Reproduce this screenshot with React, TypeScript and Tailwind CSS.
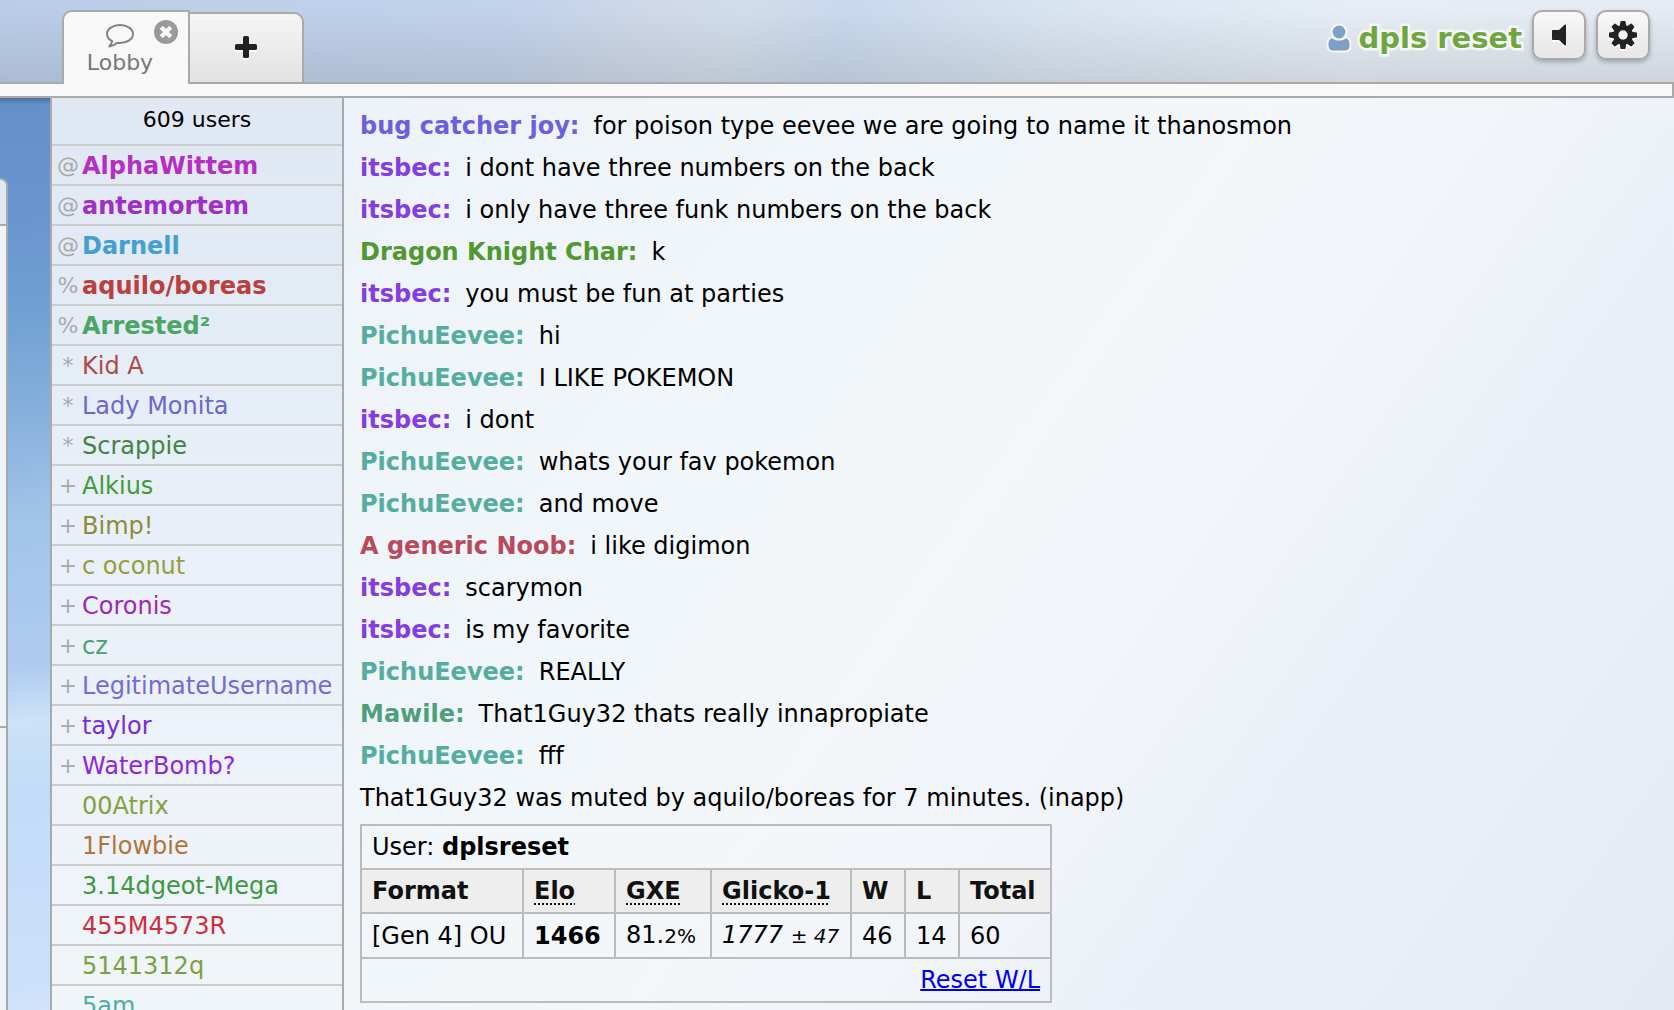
const users: { rank: string; name: string; color: string; staff?: boolean }[] = [
  { rank: "@", name: "AlphaWittem", color: "text-[#b52fc4]", staff: true },
  { rank: "@", name: "antemortem", color: "text-[#a02fc9]", staff: true },
  { rank: "@", name: "Darnell", color: "text-[#459fd0]", staff: true },
  { rank: "%", name: "aquilo/boreas", color: "text-[#bb3f3b]", staff: true },
  { rank: "%", name: "Arrested²", color: "text-[#4ba664]", staff: true },
  { rank: "*", name: "Kid A", color: "text-[#ad4b45]" },
  { rank: "*", name: "Lady Monita", color: "text-[#6c68c8]" },
  { rank: "*", name: "Scrappie", color: "text-[#458244]" },
  { rank: "+", name: "Alkius", color: "text-[#439b37]" },
  { rank: "+", name: "Bimp!", color: "text-[#8c8c3c]" },
  { rank: "+", name: "c oconut", color: "text-[#989d3c]" },
  { rank: "+", name: "Coronis", color: "text-[#9a2bb5]" },
  { rank: "+", name: "cz", color: "text-[#47a36e]" },
  { rank: "+", name: "LegitimateUsername", color: "text-[#736bd6]" },
  { rank: "+", name: "taylor", color: "text-[#7a2bd8]" },
  { rank: "+", name: "WaterBomb?", color: "text-[#8f27d9]" },
  { rank: "", name: "00Atrix", color: "text-[#85a13c]" },
  { rank: "", name: "1Flowbie", color: "text-[#b07639]" },
  { rank: "", name: "3.14dgeot-Mega", color: "text-[#3f9743]" },
  { rank: "", name: "455M4573R", color: "text-[#cc2f3f]" },
  { rank: "", name: "5141312q", color: "text-[#7ba042]" },
  { rank: "", name: "5am", color: "text-[#4faea3]" },
];

const itsbec = "text-[#843ddf]";
const pichu = "text-[#55ada0]";

const messages = [
  { name: "bug catcher joy", color: "text-[#6c5ee0]", text: "for poison type eevee we are going to name it thanosmon" },
  { name: "itsbec", color: itsbec, text: "i dont have three numbers on the back" },
  { name: "itsbec", color: itsbec, text: "i only have three funk numbers on the back" },
  { name: "Dragon Knight Char", color: "text-[#529830]", text: "k" },
  { name: "itsbec", color: itsbec, text: "you must be fun at parties" },
  { name: "PichuEevee", color: pichu, text: "hi" },
  { name: "PichuEevee", color: pichu, text: "I LIKE POKEMON" },
  { name: "itsbec", color: itsbec, text: "i dont" },
  { name: "PichuEevee", color: pichu, text: "whats your fav pokemon" },
  { name: "PichuEevee", color: pichu, text: "and move" },
  { name: "A generic Noob", color: "text-[#b94a5c]", text: "i like digimon" },
  { name: "itsbec", color: itsbec, text: "scarymon" },
  { name: "itsbec", color: itsbec, text: "is my favorite" },
  { name: "PichuEevee", color: pichu, text: "REALLY" },
  { name: "Mawile", color: "text-[#4f9f7c]", text: "That1Guy32 thats really innapropiate" },
  { name: "PichuEevee", color: pichu, text: "fff" },
];

function CommentIcon() {
  return (
    <svg viewBox="0 0 28 24" className="h-6 w-7" fill="none" stroke="#808080" strokeWidth="1.9" strokeLinejoin="round" aria-hidden="true">
      <path d="M14 1C6.800 1 1 5 1 10c0 3 2 5.500 5.200 7.200-.4 2.200-1.500 3.700-2.900 5.300 3-.5 5.800-1.700 8.100-3.700.9.100 1.700.2 2.600.2 7.200 0 13-4 13-9s-5.800-9-13-9z" />
    </svg>
  );
}

function CloseIcon() {
  return (
    <svg viewBox="0 0 24 24" className="size-6" aria-hidden="true">
      <circle cx="12" cy="12" r="12" fill="#999" />
      <path d="M8.800 8.800l6.400 6.400M15.200 8.800l-6.400 6.400" stroke="#f8f8f8" strokeWidth="4.400" strokeLinecap="square" />
    </svg>
  );
}

function PlusIcon() {
  return (
    <svg viewBox="0 0 22 22" className="size-[22px] drop-shadow-[0_2px_0_white]" fill="#222" aria-hidden="true">
      <rect x="0" y="8" width="22" height="6" rx="1.500" />
      <rect x="8" y="0" width="6" height="22" rx="1.500" />
    </svg>
  );
}

function UserIcon() {
  const body =
    "M6 15.200C3.200 15.800 2.500 19 2.500 22.500 2.500 25.500 4 27.500 7 27.500h12c3 0 4.500-2 4.500-5 0-3.500-.7-6.700-3.500-7.300-1.800 1.500-4.200 2.300-7 2.300s-5.200-.8-7-2.300z";
  return (
    <svg viewBox="0 0 26 30" className="h-[30px] w-[26px] overflow-visible" aria-hidden="true">
      <g className="[paint-order:normal]" fill="#f5f7f9" stroke="#f5f7f9" strokeWidth="4" strokeLinejoin="round">
        <path d={body} />
        <circle cx="13" cy="9" r="6.400" />
      </g>
      <g fill="#809fc4" stroke="none">
        <path d={body} />
        <circle cx="13" cy="9" r="7.200" fill="#f5f7f9" />
        <circle cx="13" cy="9" r="6.400" />
      </g>
    </svg>
  );
}

function SpeakerIcon() {
  return (
    <svg viewBox="0 0 14 22" className="h-[22px] w-[14px] drop-shadow-[0_2px_0_white]" fill="#222" aria-hidden="true">
      <path d="M14 1.200v19.600c0 .8-.8 1-1.400.4L7 16H1c-.6 0-1-.4-1-1V7c0-.6.4-1 1-1h6L12.600.8c.6-.6 1.400-.4 1.400.4z" />
    </svg>
  );
}

function GearIcon() {
  return (
    <svg viewBox="0 0 28 28" className="size-7 drop-shadow-[0_2px_0_white]" aria-hidden="true">
      <g fill="#222">
        {[0, 45, 90, 135].map((angle) => (
          <path key={angle} transform={`rotate(${angle} 14 14)`} d="M12.200 0h3.600c.4 0 .6.200.7.600L17.200 5v18l-.7 4.400c-.1.400-.3.600-.7.600h-3.600c-.4 0-.6-.2-.7-.6L10.800 23V5l.7-4.400c.1-.4.3-.6.700-.6z" />
        ))}
        <circle cx="14" cy="14" r="10" />
      </g>
      <circle cx="14" cy="14" r="4.700" fill="#f2f2f2" />
    </svg>
  );
}

const toolButton =
  "flex h-[50px] w-[54px] items-center justify-center rounded-[10px] border-2 border-[#aaa] bg-linear-to-b from-[#f8f8f8] to-[#e6e6e6] shadow-[0_2px_4px_rgba(0,0,0,0.25)]";

const abbr = "underline decoration-dotted decoration-2 underline-offset-4";

export default function App() {
  return (
    <div className="flex h-screen flex-col overflow-hidden bg-[#dce8f6] font-['DejaVu_Sans',Verdana,sans-serif] text-[24px] leading-[30px] text-black">
      <header className="shrink-0 bg-[linear-gradient(to_bottom,transparent_10%,rgba(90,95,95,0.2)),linear-gradient(105deg,#bacde8_0%,#c1d2eb_30%,#ced8e9_38%,#d2ddeb_44%,#c8d8ed_50%,#d9e4f1_62%,#e6edf5_80%,#e4ebf3_100%)]">
        <div className="flex h-[82px] items-end justify-between pl-[62px]">
          <div role="tablist" className="flex items-end">
            <div className="relative z-10 -mb-0.5 h-[74px] w-32 rounded-tl-[10px] border-2 border-b-0 border-[#aaa] bg-[#f8f8f8]">
              <button role="tab" aria-selected="true" className="flex h-full w-full flex-col items-center pt-3 pr-3 text-[22px] leading-[26px] text-[#777]">
                <CommentIcon />
                <span className="pt-0.5">Lobby</span>
              </button>
              <button aria-label="Close" className="absolute top-2 right-2.5">
                <CloseIcon />
              </button>
            </div>
            <button aria-label="Join chat" className="flex h-[70px] w-[114px] items-center justify-center rounded-tr-[10px] border-2 border-b-0 border-l-0 border-[#aaa] bg-linear-to-b from-[#f5f5f5] to-[#e2e2e2] pb-0.5">
              <PlusIcon />
            </button>
          </div>
          <div className="flex h-full items-start gap-2.5 pt-2.5 pr-6">
            <span className="flex h-[56px] items-center gap-1.5 text-[29px] font-bold text-[#6fa63f] [paint-order:stroke] [-webkit-text-stroke:5px_#f5f7f6]">
              <UserIcon />
              dpls reset
            </span>
            <button aria-label="Sound" className={toolButton}>
              <SpeakerIcon />
            </button>
            <button aria-label="Options" className={toolButton}>
              <GearIcon />
            </button>
          </div>
        </div>
        <div className="h-4 border-2 border-l-0 border-[#aaa] bg-[#f8f8f8]" />
      </header>

      <main className="flex min-h-0 flex-1 bg-[linear-gradient(to_bottom,rgba(40,60,90,0.4),transparent_6px),linear-gradient(175deg,#648fc8_0%,#6a96cf_12%,#6fa0d2_20%,#86b0dc_30%,#a2c4ea_40%,#b0cbf0_54%,#cbe2f7_59%,#c2dcf8_66%,#cbe0fb_84%,#dbeaf9_90%,#d9e6f7_100%)]">
        <div className="flex w-[50px] shrink-0 pt-20">
          <div className="w-2 rounded-tr-[10px] border-t-2 border-r-2 border-[#aaa] bg-[#eff4f9]">
            <div className="h-[46px] rounded-tr-lg border-b-2 border-[#aaa] bg-[#e0e8f2]" />
            <div className="h-[502px] border-b-2 border-[#aaa]" />
          </div>
        </div>
        <div className="flex min-w-0 flex-1 border-l-2 border-[#aaa] bg-[linear-gradient(125deg,#e8f0f8_0%,#edf3fa_14%,#eff4f9_24%,#f1f6fa_40%,#f3f7fa_54%,#f1f5fa_66%,#ebf0f8_75%,#e9eef7_84%,#e4e9f4_100%)]">
          <aside className="w-[292px] shrink-0 overflow-hidden border-r-2 border-[#aaa] bg-linear-to-b from-[#dfe8f3] via-[#e9f0f9] via-50% to-[#f0f5f9]">
            <h2 className="h-12 border-b-2 border-[#ccc] pt-2 text-center text-[22px] leading-7">609 users</h2>
            <ul>
              {users.map((u) => (
                <li key={u.name} className="h-10 border-b-2 border-[#ccc]">
                  <button className="flex h-full w-full items-center pt-0.5 whitespace-pre">
                    <span className="w-[30px] shrink-0 pl-0.5 text-center text-[22px] text-[#aaa]">{u.rank}</span>
                    <span className={u.staff ? `font-bold ${u.color}` : u.color}>{u.name}</span>
                  </button>
                </li>
              ))}
            </ul>
          </aside>
          <section className="min-w-0 flex-1 overflow-hidden pt-[7px] pl-4">
            {messages.map((m, i) => (
              <p key={i} className="h-[42px] leading-[42px]">
                <strong className={m.color}>{m.name}:</strong>
                <span className="pl-3.5">{m.text}</span>
              </p>
            ))}
            <p className="h-[42px] leading-[42px]">That1Guy32 was muted by aquilo/boreas for 7 minutes. (inapp)</p>
            <table className="mt-[5px] w-[692px] table-fixed border-collapse text-left [&_td]:border-2 [&_td]:border-[#bbb] [&_td]:px-2.5 [&_td]:py-1.5 [&_th]:border-2 [&_th]:border-[#bbb] [&_th]:px-2.5 [&_th]:py-1.5">
              <colgroup>
                <col className="w-[162px]" />
                <col className="w-[92px]" />
                <col className="w-[96px]" />
                <col className="w-[140px]" />
                <col className="w-[54px]" />
                <col className="w-[54px]" />
                <col className="w-[92px]" />
              </colgroup>
              <tbody>
                <tr>
                  <td colSpan={7}>
                    User: <strong>dplsreset</strong>
                  </td>
                </tr>
                <tr className="bg-[#eee] text-[#111]">
                  <th>Format</th>
                  <th><abbr className={abbr}>Elo</abbr></th>
                  <th><abbr className={abbr}>GXE</abbr></th>
                  <th><abbr className={abbr}>Glicko-1</abbr></th>
                  <th>W</th>
                  <th>L</th>
                  <th>Total</th>
                </tr>
                <tr>
                  <td>[Gen 4] OU</td>
                  <td><strong>1466</strong></td>
                  <td>81.<small className="text-[20px]">2%</small></td>
                  <td className="whitespace-nowrap"><em>1777 <small className="text-[20px]">± 47</small></em></td>
                  <td>46</td>
                  <td>14</td>
                  <td>60</td>
                </tr>
                <tr>
                  <td colSpan={7} className="text-right">
                    <a href="#reset" className="text-[#0000ee] underline decoration-2">Reset W/L</a>
                  </td>
                </tr>
              </tbody>
            </table>
          </section>
        </div>
      </main>
    </div>
  );
}
